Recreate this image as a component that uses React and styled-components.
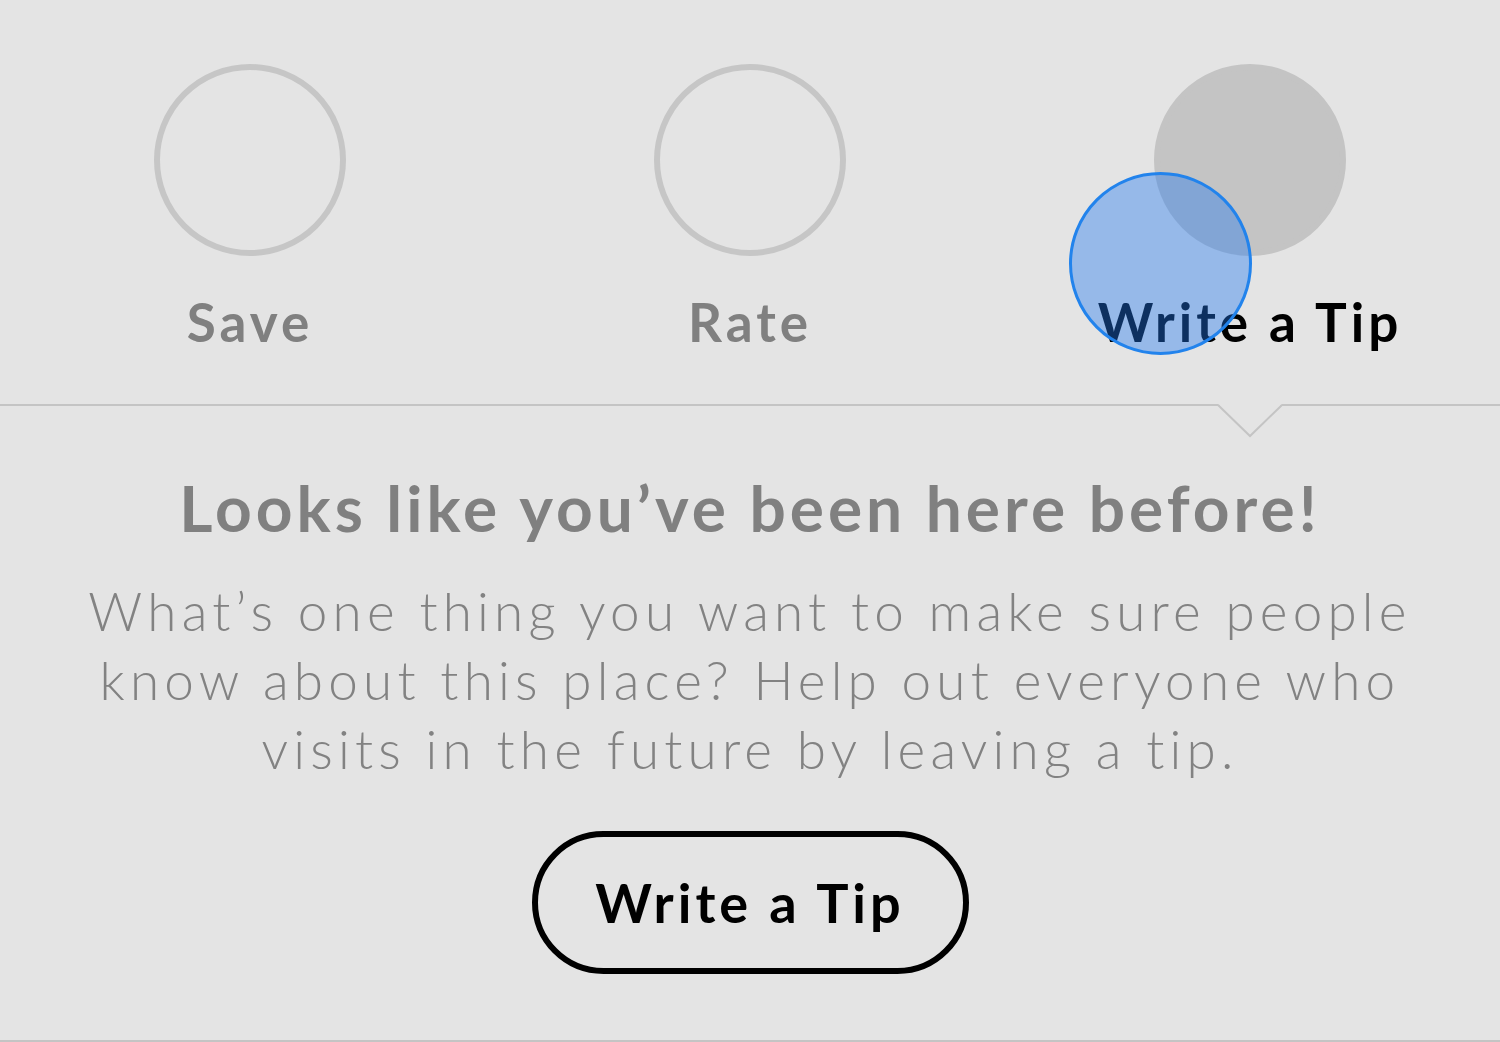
import React from "react";
import styled, { createGlobalStyle } from "styled-components";

const GlobalStyle = createGlobalStyle`
  html, body {
    margin: 0;
    padding: 0;
    background: #e4e4e4;
  }
  body {
    font-family: "Lato", "Open Sans", sans-serif;
  }
`;

const tabs = [
  { label: "Save", done: false },
  { label: "Rate", done: false },
  { label: "Write a Tip", done: true, active: true }
];

const Page = styled.div`
  position: relative;
  width: 1500px;
  height: 1042px;
  box-sizing: border-box;
  border-bottom: 2px solid #c4c4c4;
  overflow: hidden;
`;

const TabBar = styled.div`
  position: relative;
  display: grid;
  grid-template-columns: repeat(3, 1fr);
  height: 406px;
  box-sizing: border-box;
  padding-top: 64px;
  border-bottom: 2px solid #c4c4c4;
`;

const Tab = styled.div`
  position: relative;
  display: flex;
  flex-direction: column;
  align-items: center;
`;

const Circle = styled.div`
  width: 192px;
  height: 192px;
  box-sizing: border-box;
  border-radius: 50%;
  border: 6px solid ${p => (p.done ? "#c4c4c4" : "#c6c6c6")};
  background: ${p => (p.done ? "#c4c4c4" : "transparent")};
`;

const TabLabel = styled.div`
  margin-top: 34px;
  font-size: 53px;
  line-height: 64px;
  font-weight: 700;
  letter-spacing: 4px;
  color: ${p => (p.active ? "#000" : "#808080")};
`;

const Pointer = styled.svg`
  position: absolute;
  left: 50%;
  bottom: -34px;
  margin-left: -32px;
  width: 64px;
  height: 34px;
  overflow: visible;
`;

const Touch = styled.div`
  position: absolute;
  left: 1069px;
  top: 172px;
  width: 183px;
  height: 183px;
  box-sizing: border-box;
  border-radius: 50%;
  border: 3px solid #2283ec;
  background: rgba(33, 120, 240, 0.4);
  pointer-events: none;
`;

const Body = styled.div`
  display: flex;
  flex-direction: column;
  align-items: center;
  padding-top: 62px;
  text-align: center;
`;

const Heading = styled.h1`
  margin: 0;
  font-size: 64px;
  line-height: 80px;
  font-weight: 700;
  letter-spacing: 4px;
  color: #808080;
`;

const Text = styled.p`
  margin: 28px 0 0;
  width: 1400px;
  font-size: 53px;
  line-height: 69px;
  font-weight: 300;
  letter-spacing: 5.2px;
  color: #828282;
`;

const Button = styled.button`
  margin-top: 48px;
  width: 437px;
  height: 143px;
  box-sizing: border-box;
  border: 6px solid #000;
  border-radius: 72px;
  background: transparent;
  font-family: inherit;
  font-size: 54px;
  font-weight: 700;
  letter-spacing: 4px;
  color: #000;
  cursor: pointer;
`;

const App = () => (
  <>
    <GlobalStyle />
    <Page>
      <TabBar>
        {tabs.map(tab => (
          <Tab key={tab.label}>
            <Circle done={tab.done} />
            <TabLabel active={tab.active}>{tab.label}</TabLabel>
            {tab.active && (
              <Pointer viewBox="0 0 64 34">
                <polygon points="0,0 64,0 32,32" fill="#e4e4e4" />
                <polyline
                  points="0,1 32,32 64,1"
                  fill="none"
                  stroke="#c4c4c4"
                  strokeWidth="2"
                />
              </Pointer>
            )}
          </Tab>
        ))}
        <Touch />
      </TabBar>
      <Body>
        <Heading>Looks like you’ve been here before!</Heading>
        <Text>
          What’s one thing you want to make sure people know about this place?
          Help out everyone who visits in the future by leaving a tip.
        </Text>
        <Button>Write a Tip</Button>
      </Body>
    </Page>
  </>
);

export default App;
